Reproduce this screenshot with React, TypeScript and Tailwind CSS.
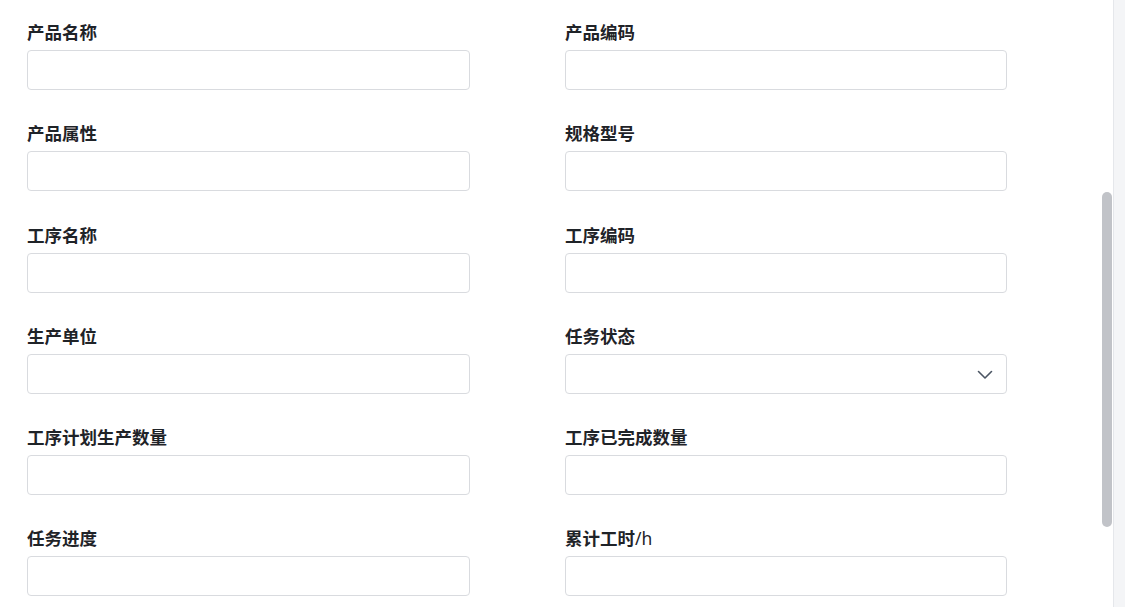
const fields: { label: string; unit?: string; select?: boolean }[] = [
  { label: '产品名称' },
  { label: '产品编码' },
  { label: '产品属性' },
  { label: '规格型号' },
  { label: '工序名称' },
  { label: '工序编码' },
  { label: '生产单位' },
  { label: '任务状态', select: true },
  { label: '工序计划生产数量' },
  { label: '工序已完成数量' },
  { label: '任务进度' },
  { label: '累计工时', unit: '/h' },
];

function Field({ label, unit, select }: { label: string; unit?: string; select?: boolean }) {
  return (
    <div className="flex flex-col">
      <label className="h-6 text-[17.5px] leading-6 font-bold text-[#1f2328]">
        {label}
        {unit && <span className="font-normal">{unit}</span>}
      </label>
      <div className="relative mt-[6px] h-10 rounded border border-[#d9dbdf] bg-white">
        {select && (
          <svg
            className="absolute right-[13px] top-[15px]"
            width="16"
            height="10"
            viewBox="0 0 16 10"
            fill="none"
            stroke="#4b5563"
            strokeWidth="1.6"
            strokeLinecap="round"
            strokeLinejoin="round"
          >
            <path d="M1.5 1.5 L8 8 L14.5 1.5" />
          </svg>
        )}
      </div>
    </div>
  );
}

export default function App() {
  return (
    <div
      className="flex h-[607px] w-[1125px] overflow-hidden bg-white"
      style={{ fontFamily: '"Noto Sans", "Noto Sans CJK SC", sans-serif' }}
    >
      <div className="relative flex-1">
        <div className="grid grid-cols-[443px_442px] gap-x-[95px] gap-y-[31.25px] pl-[27px] pt-[20px]">
          {fields.map((f) => (
            <Field key={f.label} label={f.label} unit={f.unit} select={f.select} />
          ))}
        </div>
        <div className="absolute right-[1px] top-[192px] h-[335px] w-[10px] rounded-full bg-[#c1c3c8]" />
      </div>
      <div className="w-[12px] border-l border-[#e5e7eb] bg-[#f4f5f7]" />
    </div>
  );
}
